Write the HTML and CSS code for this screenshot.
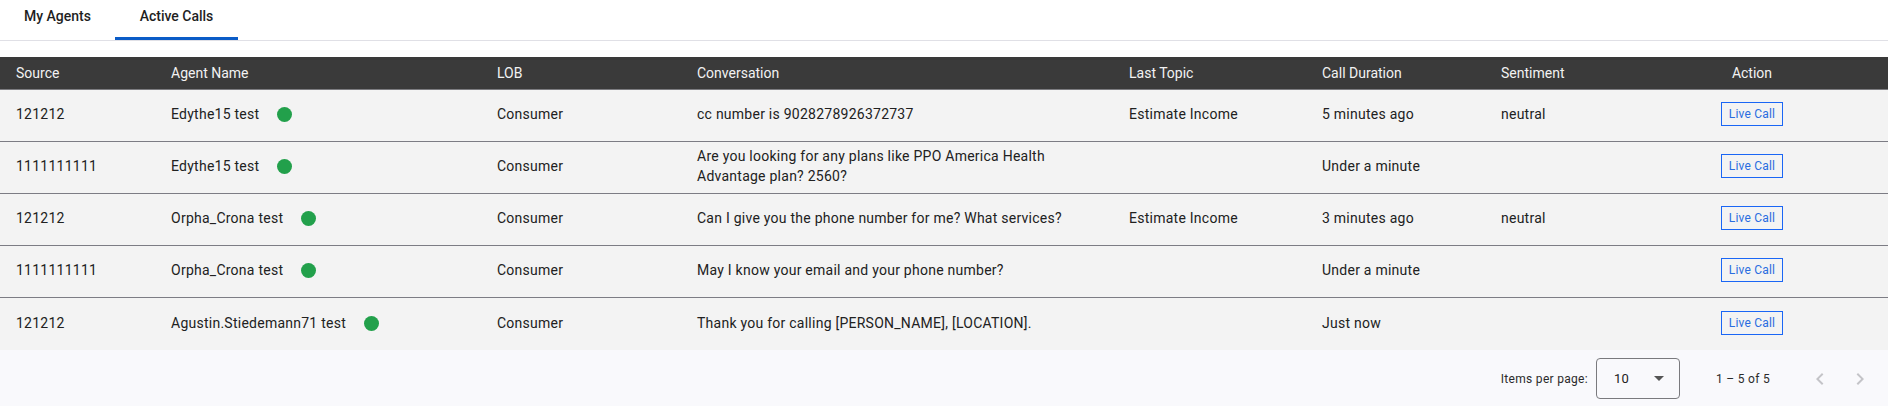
FILE: index.html
```html
<!DOCTYPE html>
<html lang="en">
<head>
    <meta charset="UTF-8">
    <meta name="viewport" content="width=device-width, initial-scale=1.0">
    <title>Active Calls</title>
    <link rel="stylesheet" href="styles.css">
</head>
<body>
    <div class="tabs">
        <div class="tab">My Agents</div>
        <div class="tab active">Active Calls</div>
    </div>

    <div class="table-wrap">
        <table class="calls">
            <colgroup>
                <col class="c-source">
                <col class="c-agent">
                <col class="c-lob">
                <col class="c-conv">
                <col class="c-topic">
                <col class="c-dur">
                <col class="c-sent">
                <col class="c-action">
            </colgroup>
            <thead>
                <tr>
                    <th>Source</th>
                    <th>Agent Name</th>
                    <th>LOB</th>
                    <th>Conversation</th>
                    <th>Last Topic</th>
                    <th>Call Duration</th>
                    <th>Sentiment</th>
                    <th class="center">Action</th>
                </tr>
            </thead>
            <tbody>
                <tr>
                    <td>121212</td>
                    <td>Edythe15 test <span class="dot"></span></td>
                    <td>Consumer</td>
                    <td>cc number is 9028278926372737</td>
                    <td>Estimate Income</td>
                    <td>5 minutes ago</td>
                    <td>neutral</td>
                    <td class="center"><button class="live-btn">Live Call</button></td>
                </tr>
                <tr>
                    <td>1111111111</td>
                    <td>Edythe15 test <span class="dot"></span></td>
                    <td>Consumer</td>
                    <td>Are you looking for any plans like PPO America Health Advantage plan? 2560?</td>
                    <td></td>
                    <td>Under a minute</td>
                    <td></td>
                    <td class="center"><button class="live-btn">Live Call</button></td>
                </tr>
                <tr>
                    <td>121212</td>
                    <td>Orpha_Crona test <span class="dot"></span></td>
                    <td>Consumer</td>
                    <td>Can I give you the phone number for me? What services?</td>
                    <td>Estimate Income</td>
                    <td>3 minutes ago</td>
                    <td>neutral</td>
                    <td class="center"><button class="live-btn">Live Call</button></td>
                </tr>
                <tr>
                    <td>1111111111</td>
                    <td>Orpha_Crona test <span class="dot"></span></td>
                    <td>Consumer</td>
                    <td>May I know your email and your phone number?</td>
                    <td></td>
                    <td>Under a minute</td>
                    <td></td>
                    <td class="center"><button class="live-btn">Live Call</button></td>
                </tr>
                <tr>
                    <td>121212</td>
                    <td>Agustin.Stiedemann71 test <span class="dot"></span></td>
                    <td>Consumer</td>
                    <td>Thank you for calling [PERSON_NAME], [LOCATION].</td>
                    <td></td>
                    <td>Just now</td>
                    <td></td>
                    <td class="center"><button class="live-btn">Live Call</button></td>
                </tr>
            </tbody>
        </table>

        <div class="paginator">
            <span class="page-label">Items per page:</span>
            <div class="page-select">
                <span>10</span>
                <span class="caret"></span>
            </div>
            <span class="page-range">1 &ndash; 5 of 5</span>
            <div class="page-nav">
                <svg width="24" height="24" viewBox="0 0 24 24"><path d="M15.4 7.4 14 6l-6 6 6 6 1.4-1.4L10.8 12z" fill="#c4c4c8"/></svg>
                <svg width="24" height="24" viewBox="0 0 24 24"><path d="M10 6 8.6 7.4 13.2 12l-4.6 4.6L10 18l6-6z" fill="#c4c4c8"/></svg>
            </div>
        </div>
    </div>
</body>
</html>
```

FILE: styles.css
```css
body {
    margin: 0;
    font-family: Roboto, "Liberation Sans", Arial, sans-serif;
    font-size: 14px;
    color: #212121;
    background-color: #fff;
}
.tabs {
    display: flex;
    height: 40px;
    border-bottom: 1px solid #e0e0e6;
}
.tab {
    display: flex;
    align-items: center;
    justify-content: center;
    padding: 0 24px;
    min-width: 68px;
    font-weight: 500;
    color: #1f1f1f;
    border-bottom: 3px solid transparent;
    box-sizing: border-box;
    height: 40px;
    padding-bottom: 6px;
}
.tab.active {
    border-bottom-color: #0b5cc7;
    width: 123px;
}
.table-wrap {
    margin-top: 16px;
}
.calls {
    width: 100%;
    border-collapse: collapse;
    table-layout: fixed;
}
.c-source { width: 155px; }
.c-agent { width: 326px; }
.c-lob { width: 200px; }
.c-conv { width: 432px; }
.c-topic { width: 193px; }
.c-dur { width: 179px; }
.c-sent { width: 131px; }
.calls th {
    background-color: #3a3a3a;
    color: #f2f2f2;
    font-weight: 400;
    text-align: left;
    height: 32px;
    padding: 0 16px;
    border-bottom: 1px solid #7c7c80;
}
.calls td {
    background-color: #f3f3f3;
    height: 48px;
    padding: 0 16px 3px;
    line-height: 20px;
    letter-spacing: 0.25px;
    border-bottom: 1px solid #7c7c84;
    vertical-align: middle;
}
.calls tbody tr:last-child td {
    border-bottom: none;
    height: 49px;
}
.calls .center {
    text-align: center;
}
.dot {
    display: inline-block;
    width: 15px;
    height: 15px;
    border-radius: 50%;
    background-color: #22a04b;
    margin-left: 14px;
    vertical-align: -3px;
}
.live-btn {
    font-family: Roboto, "Liberation Sans", Arial, sans-serif;
    font-size: 12px;
    letter-spacing: 0.2px;
    color: #2a6de0;
    background-color: transparent;
    border: 1px solid #1a66f5;
    height: 24px;
    width: 62px;
    padding: 0;
}
.paginator {
    display: flex;
    align-items: center;
    justify-content: flex-end;
    height: 57px;
    background-color: #f9f9fc;
    font-size: 12px;
    letter-spacing: 0.3px;
    color: #2b2b2b;
    padding-right: 16px;
}
.page-label {
    margin-right: 8px;
}
.page-select {
    display: flex;
    align-items: center;
    justify-content: space-between;
    width: 84px;
    height: 41px;
    box-sizing: border-box;
    border: 1px solid #7a7a7e;
    border-radius: 4px;
    padding: 0 15px 0 17px;
    font-size: 13px;
    color: #222;
}
.caret {
    width: 0;
    height: 0;
    border-left: 5px solid transparent;
    border-right: 5px solid transparent;
    border-top: 5px solid #555;
}
.page-range {
    margin-left: 36px;
    margin-right: 38px;
}
.page-nav {
    display: flex;
    gap: 16px;
}
```
